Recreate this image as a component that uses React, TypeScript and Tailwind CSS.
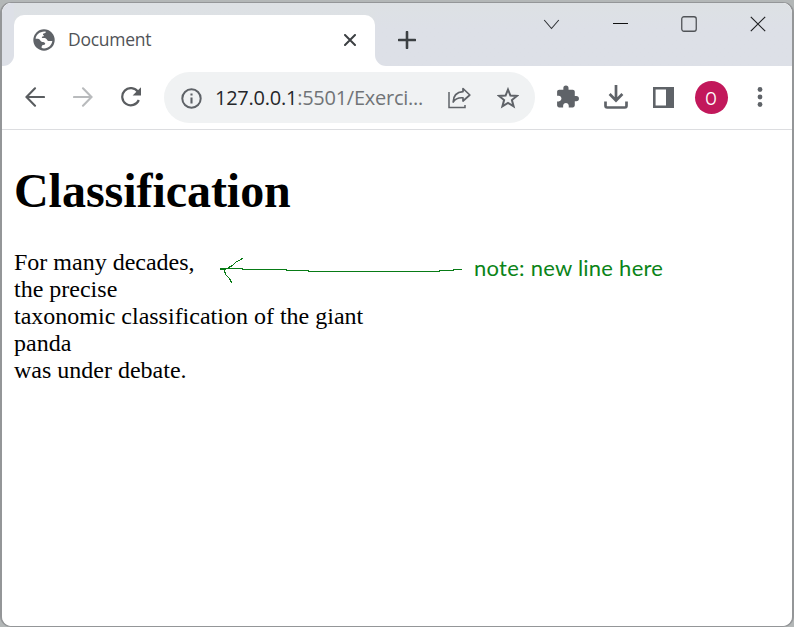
import React from "react";

const ui = "font-['Open_Sans','Noto_Sans',sans-serif]";

function Globe() {
  return (
    <svg className="-mt-[2px] ml-[19px] h-[22px] w-[22px] shrink-0" viewBox="0 0 22 22">
      <circle cx="11" cy="11" r="10.700" fill="#5f6368" />
      <path
        d="M2.600 9.800C3 5.800 6.400 2.700 11.500 2.500L13 2.700C12.700 3.800 11.800 4.200 10.700 4.400C9.700 4.700 9.800 5.900 10.700 6.200C11.300 6.700 10.700 7.500 9.500 7.600C8.700 7.800 8.600 8.700 9.300 9C11.200 9.100 12.800 8.800 13.700 10.200C14.300 11.500 15.100 12 16.300 12H19.300C18.800 16 15.700 19.300 11 19.400L8.700 19.100C8.500 17.600 8.700 16.200 10.200 16C11.700 15.900 12.500 15.200 12.100 14.200C11.700 13.100 10.500 13 9.200 12.900C7.600 12.900 7.500 11.700 6.600 10.600C5.900 9.800 4.200 9.900 2.600 9.800z"
        fill="#fff"
      />
    </svg>
  );
}

function TabStrip() {
  return (
    <div className="flex h-[63px] shrink-0 bg-white">
      <div className="w-3 rounded-br-[11px] bg-[#dde0e7]" />
      <div className="w-[361px] bg-gradient-to-b from-[#dde1e4] to-[#dde0e7] pt-3">
        <div className="flex h-[51px] items-center rounded-t-[10px] bg-white">
          <Globe />
          <span className={`${ui} -mt-[3px] ml-[13px] w-[100px] whitespace-nowrap text-[17.5px] leading-6 tracking-[-0.25px] text-[#505357]`}>Document</span>
          <svg className="-mt-[2px] ml-auto mr-[19px] h-[12px] w-[12px]" viewBox="0 0 12 12">
            <path d="M1 1l10 10M11 1L1 11" stroke="#3c4043" strokeWidth="2" fill="none" strokeLinecap="round" />
          </svg>
        </div>
      </div>
      <div className="flex flex-1 rounded-bl-[11px] bg-gradient-to-b from-[#dde1e4] to-[#dde0e7] to-40%">
        <svg className="ml-[23px] mt-[28px] h-[18px] w-[18px]" viewBox="0 0 18 18">
          <path d="M9 1v16M1 9h16" stroke="#3c4043" strokeWidth="2.600" strokeLinecap="round" />
        </svg>
        <svg className="ml-[127px] mt-[16px] h-[11px] w-[17px]" viewBox="0 0 17 11">
          <path d="M1.200 1l7.300 8.500L15.800 1" fill="none" stroke="#303236" strokeWidth="1.100" />
        </svg>
        <svg className="ml-[53px] mt-[20px] h-px w-[15px]" viewBox="0 0 15 1">
          <path d="M0 .5h15" stroke="#111" />
        </svg>
        <svg className="ml-[53px] mt-[13px] h-4 w-4" viewBox="0 0 16 16">
          <rect x=".75" y=".75" width="14.500" height="14.500" rx="2.200" fill="none" stroke="#505357" strokeWidth="1.300" />
        </svg>
        <svg className="ml-[53px] mt-[13px] h-4 w-4" viewBox="0 0 16 16">
          <path d="M.8.800l14.400 14.400M15.200.800L.8 15.200" stroke="#202124" strokeWidth="1.200" />
        </svg>
      </div>
    </div>
  );
}

function Toolbar() {
  return (
    <div className="flex h-[64px] shrink-0 items-center border-b border-[#dcdde0] bg-white">
      <svg className="-mt-[2px] ml-[23px] h-5 w-5" viewBox="0 0 20 20">
        <path d="M19 10H2M10 1.300L1.500 10l8.500 8.700" fill="none" stroke="#5a5d60" strokeWidth="2.100" strokeLinecap="round" />
      </svg>
      <svg className="-mt-[2px] ml-[28px] h-5 w-5" viewBox="0 0 20 20">
        <path d="M1 10h17M10 1.300l8.500 8.700-8.500 8.700" fill="none" stroke="#b9bbbd" strokeWidth="2.100" strokeLinecap="round" />
      </svg>
      <svg className="-mt-[2px] ml-[27px] h-5 w-[22px]" viewBox="0 0 22 20">
        <path d="M18 4.900A8.600 8.600 0 1 0 18.800 13" fill="none" stroke="#5a5d60" strokeWidth="2.200" />
        <path d="M21 .2v8.400h-8.400z" fill="#5a5d60" />
      </svg>
      <div className="ml-[22px] flex h-[51px] w-[371px] items-center rounded-full bg-[#f0f2f3]">
        <svg className="ml-[17px] mt-[2px] h-[21px] w-[21px]" viewBox="0 0 21 21">
          <circle cx="10.500" cy="10.500" r="9.200" fill="none" stroke="#5f6368" strokeWidth="2" />
          <path d="M10.500 9.500v6M10.500 5.500v2.100" stroke="#5f6368" strokeWidth="2.100" />
        </svg>
        <span className={`${ui} ml-[13px] w-[220px] whitespace-nowrap text-[20px] leading-6 tracking-[-0.25px] text-[#707477]`}>
          <span className="text-[#25272a]">127.0.0.1</span>:5501/Exerci...
        </span>
        <svg className="ml-[12px] mt-[1px] h-[22px] w-6" viewBox="0 0 24 22">
          <path d="M2 5v15.500h16V18" fill="none" stroke="#5f6368" strokeWidth="1.500" />
          <path d="M16 1.500L22.800 8l-6.800 6V10.800C11.500 10.500 8 12 6.200 15c.1-6 3.700-9.800 9.800-10.300z" fill="none" stroke="#5f6368" strokeWidth="1.700" strokeLinejoin="round" />
        </svg>
        <svg className="ml-[25.500px] h-[22px] w-[22px]" viewBox="0 0 22 22">
          <path d="M11 2.500l2.400 6 6.500.4-5 4.200 1.700 6.300-5.600-3.500-5.600 3.500 1.700-6.300-5-4.200 6.500-.4z" fill="none" stroke="#5f6368" strokeWidth="2" />
        </svg>
      </div>
      <svg className="ml-[20px] h-[25px] w-[25px] -translate-y-[0.5px]" viewBox="0 0 24 24">
        <path d="M20.500 11H19V7c0-1.100-.9-2-2-2h-4V3.500a2.500 2.500 0 0 0-5 0V5H4c-1.100 0-1.990.9-1.990 2v3.800H3.500c1.490 0 2.700 1.210 2.700 2.700s-1.210 2.700-2.700 2.700H2V20c0 1.100.9 2 2 2h3.800v-1.500c0-1.490 1.210-2.700 2.700-2.700s2.700 1.210 2.700 2.700V22H17c1.100 0 2-.9 2-2v-4h1.500a2.500 2.500 0 0 0 0-5z" fill="#5f6368" />
      </svg>
      <svg className="-mt-px ml-[24px] h-6 w-6" viewBox="0 0 24 24">
        <path d="M12 0v15M5.600 9l6.400 6.500L18.400 9" fill="none" stroke="#5f6368" strokeWidth="2.700" />
        <path d="M1.500 16.500v4.300q0 1.700 1.700 1.700h17.600q1.700 0 1.700-1.700v-4.300" fill="none" stroke="#5f6368" strokeWidth="2.700" />
      </svg>
      <svg className="-mt-px ml-[25px] h-[21px] w-[21px]" viewBox="0 0 21 21">
        <path d="M0 0h21v21H0zM2.600 2.600v15.800H13V2.600z" fill="#5f6368" fillRule="evenodd" />
      </svg>
      <div className={`${ui} ml-[21px] flex h-[33px] w-[33px] items-center justify-center rounded-full bg-[#c2185b] text-[18px] leading-none text-white`}>
        <span className="scale-x-[0.82]">O</span>
      </div>
      <svg className="-mt-[2px] ml-[28.500px] h-[22px] w-[6px]" viewBox="0 0 6 22">
        <circle cx="3" cy="3.500" r="2.400" fill="#5f6368" />
        <circle cx="3" cy="11" r="2.400" fill="#5f6368" />
        <circle cx="3" cy="18.500" r="2.400" fill="#5f6368" />
      </svg>
    </div>
  );
}

function Note() {
  return (
    <div className="absolute left-[216px] top-[126px] flex items-start text-[#087b16]">
      <svg className="h-[34px] w-[246px] shrink-0" viewBox="0 0 246 34" fill="none" stroke="currentColor" strokeWidth="1.100" shapeRendering="crispEdges">
        <path d="M2 12.500h22l1 1h43l1 1h21l1 1h130l1-1h13l1-1h8" />
        <path d="M2 13l3 1 5-2 5-3 3-3 4-2 3-2M6 14l2 5 3 3 3 5" />
      </svg>
      <span className="-mt-[2px] ml-[10px] whitespace-nowrap font-['Lato','Open_Sans',sans-serif] text-[22px] leading-[27px] tracking-[0.25px] text-[#0b8418]">note: new line here</span>
    </div>
  );
}

export default function App() {
  return (
    <div className="h-[627px] w-[794px] overflow-hidden bg-[#b3b7b7]">
      <div className="flex h-full flex-col bg-[#b3b7b7] pt-[2px]">
        <div className="flex min-h-0 flex-1 flex-col overflow-hidden rounded-[11px] border-x-2 border-b border-t border-[#949698] bg-white">
          <TabStrip />
          <Toolbar />
          <main className="relative flex-1 bg-white pl-3 pt-[33px] font-['Liberation_Serif',serif] text-black">
            <h1 className="whitespace-nowrap text-[48px] font-bold leading-[55px] tracking-[-0.04px]">Classification</h1>
            <p className="mt-[31px] whitespace-nowrap text-[24px] leading-[27px]">
              For many decades,
              <br />
              the precise
              <br />
              taxonomic classification of the giant
              <br />
              panda
              <br />
              was under debate.
            </p>
            <Note />
          </main>
        </div>
      </div>
    </div>
  );
}
